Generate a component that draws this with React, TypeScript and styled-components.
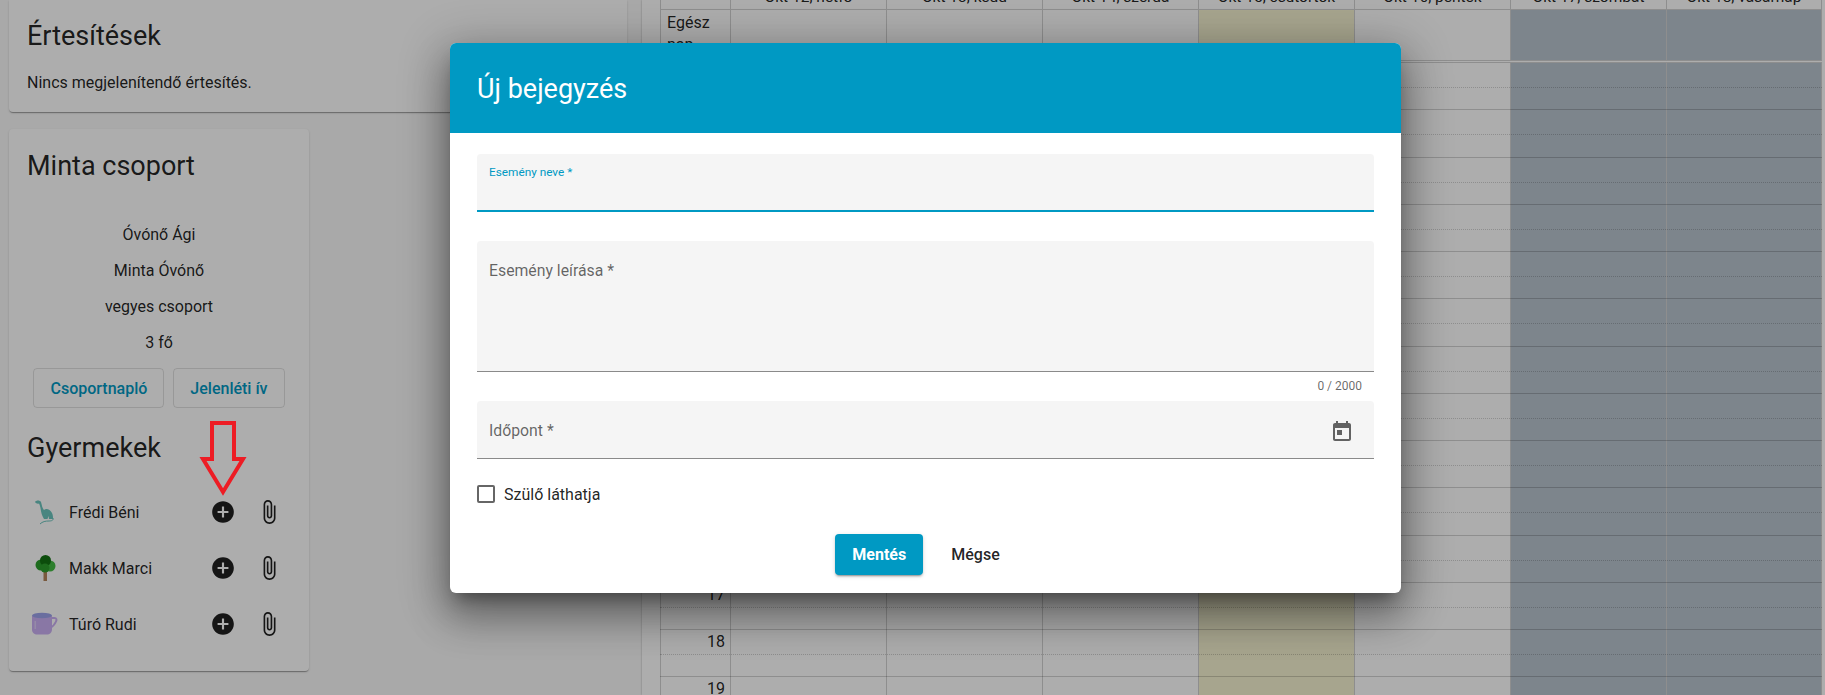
import React from 'react';
import styled, { createGlobalStyle } from 'styled-components';

const Global = createGlobalStyle`
  html, body { margin: 0; padding: 0; height: 100%; background: #fafafa; overflow: hidden; }
  body { font-family: Roboto, "Liberation Sans", sans-serif; color: rgba(0,0,0,.87); }
  * { box-sizing: border-box; }
`;

const primary = '#0099c3';
const line = '#d2d2d2';
const rule = 'rgba(0,0,0,.18)';

const Page = styled.div`
  position: relative;
  width: 1825px;
  height: 695px;
  overflow: hidden;
  display: flex;
  align-items: flex-start;
  background: #fafafa;
`;
const LeftColumn = styled.div`
  width: 618px;
  margin-left: 9px;
  flex: none;
  display: flex;
  flex-direction: column;
  gap: 17px;
`;
const Card = styled.section<{ $narrow?: boolean }>`
  width: ${p => (p.$narrow ? '300px' : '100%')};
  background: #fff;
  border-radius: ${p => (p.$narrow ? '4px' : '0 0 4px 4px')};
  padding: ${p => (p.$narrow ? '21px 18px 19px' : '20px 18px 19px')};
  box-shadow: 0 2px 1px -1px rgba(0,0,0,.2), 0 1px 1px 0 rgba(0,0,0,.14), 0 1px 3px 0 rgba(0,0,0,.12);
`;
const CardTitle = styled.h2`
  margin: 0;
  font-size: 27px;
  line-height: 32px;
  font-weight: 400;
`;
const BodyText = styled.p`
  margin: 21px 0 0;
  font-size: 16px;
  line-height: 20px;
`;
const InfoList = styled.div`
  margin-top: 43px;
  display: flex;
  flex-direction: column;
  gap: 16px;
  align-items: center;
  font-size: 16px;
  line-height: 20px;
`;
const ButtonRow = styled.div`
  margin-top: 15px;
  display: flex;
  justify-content: center;
  gap: 9px;
`;
const OutlineButton = styled.button`
  height: 40px;
  padding: 0 16px;
  background: transparent;
  border: 1px solid rgba(0,0,0,.12);
  border-radius: 4px;
  color: ${primary};
  font: 500 16px Roboto, sans-serif;
  white-space: nowrap;
`;
const SubTitle = styled(CardTitle)`
  margin-top: 24px;
  margin-bottom: 20px;
`;
const ChildRow = styled.div`
  height: 56px;
  display: flex;
  align-items: center;
  gap: 20px;
  padding-left: 5px;
  padding-right: 9px;
`;
const ChildIdentity = styled.div`
  flex: 1;
  display: flex;
  align-items: center;
  gap: 11px;
  font-size: 16px;
`;
const IconBox = styled.svg`
  width: 26px;
  height: 26px;
  flex: none;
  display: block;
`;

const CalendarPanel = styled.div`
  margin-left: 15px;
  flex: 1;
  height: 695px;
  padding-left: 18px;
  padding-right: 3px;
  background: #fff;
  box-shadow: 0 0 2px rgba(0,0,0,.3);
`;
const gridCols = 'grid-template-columns: 70px repeat(7, 156px);';
const HeaderRow = styled.div`
  display: grid;
  ${gridCols}
  height: 10px;
  border-bottom: 1px solid ${line};
`;
const HeaderCell = styled.div`
  height: 9px;
  overflow: hidden;
  display: flex;
  align-items: flex-end;
  justify-content: center;
  border-left: 1px solid ${line};
  font-size: 15.5px;
  line-height: 20px;
  white-space: nowrap;
  &:last-child { border-right: 1px solid ${line}; }
`;
const HeaderLabel = styled.span`
  display: block;
  margin-bottom: 2px;
`;
const AllDayRow = styled.div`
  display: grid;
  ${gridCols}
  height: 53px;
  border-bottom: 3px double ${line};
`;
const AllDayLabel = styled.div`
  padding: 2px 0 0 6px;
  font-size: 16px;
  line-height: 22px;
  border-left: 1px solid ${line};
  overflow: hidden;
`;
type Kind = 'plain' | 'today' | 'weekend';
const kindBg: Record<Kind, string> = { plain: 'transparent', today: '#f7f4d1', weekend: '#b9c4cf' };
const DayCell = styled.div<{ $kind: Kind }>`
  background: ${p => kindBg[p.$kind]};
  border-left: 1px solid ${line};
  &:last-child { border-right: 1px solid ${line}; }
`;
const HourRow = styled.div`
  display: grid;
  ${gridCols}
  grid-template-rows: 47.25px;
`;
const HourCellLayer = styled.div`
  grid-column: 1 / -1;
  grid-row: 1;
  display: grid;
  ${gridCols}
`;
const TimeCell = styled.div`
  border-left: 1px solid ${line};
  padding-right: 5px;
  text-align: right;
  font-size: 16px;
  line-height: 23px;
`;
const RowRules = styled.div`
  grid-column: 1 / -1;
  grid-row: 1;
  border-bottom: 1px solid ${rule};
  pointer-events: none;
  &::before {
    content: '';
    display: block;
    height: 24px;
    border-bottom: 1px dotted ${rule};
  }
`;

const Overlay = styled.div`
  position: absolute;
  inset: 0;
  background: rgba(0,0,0,.32);
  padding: 43px 0 0 450px;
  display: flex;
  align-items: flex-start;
`;
const Dialog = styled.div`
  width: 951px;
  height: 550px;
  background: #fff;
  border-radius: 6px;
  overflow: hidden;
  display: flex;
  flex-direction: column;
  box-shadow: 0 11px 15px -7px rgba(0,0,0,.36), 0 24px 38px 3px rgba(0,0,0,.26), 0 9px 46px 8px rgba(0,0,0,.23);
`;
const DialogHeader = styled.header`
  height: 90px;
  flex: none;
  padding: 1px 0 0 27px;
  display: flex;
  align-items: center;
  background: ${primary};
  color: #fff;
  font-size: 27px;
  font-weight: 400;
`;
const DialogBody = styled.div`
  flex: 1;
  padding: 21px 27px 0;
  display: flex;
  flex-direction: column;
`;
const Field = styled.div<{ $h: number; $active?: boolean; $gap?: number }>`
  height: ${p => p.$h}px;
  margin-top: ${p => p.$gap ?? 0}px;
  flex: none;
  background: #f5f5f5;
  border-radius: 4px 4px 0 0;
  border-bottom: ${p => (p.$active ? `2px solid ${primary}` : '1px solid #8a8a8a')};
  padding: 0 20px 0 12px;
  display: flex;
  justify-content: space-between;
`;
const FloatLabel = styled.label`
  margin-top: 10px;
  font-size: 11.8px;
  line-height: 16px;
  color: ${primary};
`;
const FieldLabel = styled.label<{ $top: number }>`
  margin-top: ${p => p.$top}px;
  font-size: 15.8px;
  line-height: 20px;
  color: rgba(0,0,0,.6);
`;
const Counter = styled.div`
  height: 29px;
  padding: 5px 12px 0 0;
  text-align: right;
  font-size: 12px;
  line-height: 18px;
  color: rgba(0,0,0,.6);
`;
const FieldIcon = styled.svg`
  width: 24px;
  height: 24px;
  margin-top: 19px;
  fill: rgba(0,0,0,.6);
`;
const CheckRow = styled.div`
  margin-top: 26px;
  height: 18px;
  display: flex;
  align-items: center;
  gap: 9px;
  font-size: 16px;
`;
const CheckBox = styled.span`
  width: 18px;
  height: 18px;
  border: 2px solid rgba(0,0,0,.6);
  border-radius: 2px;
`;
const ActionRow = styled.div`
  margin-top: 31px;
  display: flex;
  justify-content: center;
  align-items: center;
  gap: 28px;
  padding-right: 16px;
`;
const SaveButton = styled.button`
  width: 88px;
  height: 41px;
  border: 0;
  border-radius: 4px;
  background: ${primary};
  color: #fff;
  font: 700 16px Roboto, sans-serif;
  box-shadow: 0 3px 1px -2px rgba(0,0,0,.2), 0 2px 2px 0 rgba(0,0,0,.14), 0 1px 5px 0 rgba(0,0,0,.12);
`;
const TextButton = styled.button`
  border: 0;
  padding: 0;
  background: transparent;
  color: rgba(0,0,0,.87);
  font: 500 16px Roboto, sans-serif;
`;
const ArrowMark = styled.svg`
  position: absolute;
  left: 198px;
  top: 419px;
  width: 50px;
  height: 80px;
`;

const days: { label: string; kind: Kind }[] = [
  { label: 'Okt 12, hétfő', kind: 'plain' },
  { label: 'Okt 13, kedd', kind: 'plain' },
  { label: 'Okt 14, szerda', kind: 'plain' },
  { label: 'Okt 15, csütörtök', kind: 'today' },
  { label: 'Okt 16, péntek', kind: 'plain' },
  { label: 'Okt 17, szombat', kind: 'weekend' },
  { label: 'Okt 18, vasárnap', kind: 'weekend' },
];
const hours = Array.from({ length: 14 }, (_, i) => i + 6);

const AddIcon = () => (
  <IconBox viewBox="0 0 24 24" fill="#1f1f1f">
    <path d="M12 2C6.48 2 2 6.48 2 12s4.48 10 10 10 10-4.48 10-10S17.52 2 12 2zm5 11h-4v4h-2v-4H7v-2h4V7h2v4h4v2z" />
  </IconBox>
);
const ClipIcon = () => (
  <IconBox viewBox="0 0 24 24" fill="#1f1f1f">
    <path d="M16.5 6v11.5c0 2.21-1.79 4-4 4s-4-1.79-4-4V5c0-1.38 1.12-2.5 2.5-2.5s2.5 1.12 2.5 2.5v10.5c0 .55-.45 1-1 1s-1-.45-1-1V6H10v9.5c0 1.38 1.12 2.5 2.5 2.5s2.5-1.12 2.5-2.5V5c0-2.21-1.79-4-4-4S7 2.79 7 5v12.5c0 3.04 2.46 5.5 5.5 5.5s5.5-2.46 5.5-5.5V6h-1.5z" />
  </IconBox>
);
const DinoIcon = () => (
  <IconBox viewBox="0 0 26 26">
    <path fill="#6bc4bd" d="M3 3C4 1 8 1 9 3C10 6 10 9 12 11C14 9 18 10 20 14C21 16 21 18 21 20L17 20L16.5 17L15.5 20L12 20C10 17 9 13 8.5 9C8 7 7.5 5 7 4.5C5.5 5 4 4.5 3 3Z" />
    <path fill="none" stroke="#6bc4bd" strokeWidth="1" d="M21 19c.8 2.3-1.5 3-4 3-3.5 0-6.500.5-9 3" />
  </IconBox>
);
const TreeIcon = () => (
  <IconBox viewBox="0 0 26 26">
    <rect x="11.5" y="14" width="3.5" height="12" fill="#b3845a" />
    <circle cx="9" cy="10" r="5.5" fill="#2b9e2c" />
    <circle cx="18" cy="11" r="5.5" fill="#44bb44" />
    <circle cx="13.5" cy="5.5" r="5.5" fill="#137213" />
    <circle cx="13" cy="13" r="4.5" fill="#2b9e2c" />
  </IconBox>
);
const MugIcon = () => (
  <IconBox viewBox="0 0 26 26">
    <path fill="none" stroke="#cbb0f3" strokeWidth="2" d="M19 7h3.5c2 0 2.5 1.5 1.5 3.5-1 2.5-3 5-6 6.5" />
    <path fill="#cbb0f3" d="M0 4.500h20v14c0 3-2.500 5-5 5H5c-2.500 0-5-1.500-5-5z" />
    <ellipse cx="10" cy="4.5" rx="10" ry="2.8" fill="#9ca3eb" />
    <rect x="2.5" y="10" width="1.5" height="8" fill="#dccdf7" />
  </IconBox>
);

const children = [
  { name: 'Frédi Béni', Icon: DinoIcon },
  { name: 'Makk Marci', Icon: TreeIcon },
  { name: 'Túró Rudi', Icon: MugIcon },
];

export default function App() {
  return (
    <Page>
      <Global />
      <LeftColumn>
        <Card>
          <CardTitle>Értesítések</CardTitle>
          <BodyText>Nincs megjelenítendő értesítés.</BodyText>
        </Card>
        <Card $narrow>
          <CardTitle>Minta csoport</CardTitle>
          <InfoList>
            <span>Óvónő Ági</span>
            <span>Minta Óvónő</span>
            <span>vegyes csoport</span>
            <span>3 fő</span>
          </InfoList>
          <ButtonRow>
            <OutlineButton>Csoportnapló</OutlineButton>
            <OutlineButton>Jelenléti ív</OutlineButton>
          </ButtonRow>
          <SubTitle>Gyermekek</SubTitle>
          {children.map(({ name, Icon }) => (
            <ChildRow key={name}>
              <ChildIdentity>
                <Icon />
                <span>{name}</span>
              </ChildIdentity>
              <AddIcon />
              <ClipIcon />
            </ChildRow>
          ))}
        </Card>
      </LeftColumn>

      <CalendarPanel>
        <HeaderRow>
          <HeaderCell />
          {days.map(d => (
            <HeaderCell key={d.label}><HeaderLabel>{d.label}</HeaderLabel></HeaderCell>
          ))}
        </HeaderRow>
        <AllDayRow>
          <AllDayLabel>Egész nap</AllDayLabel>
          {days.map(d => <DayCell key={d.label} $kind={d.kind} />)}
        </AllDayRow>
        {hours.map(h => (
          <HourRow key={h}>
            <HourCellLayer>
              <TimeCell>{h}</TimeCell>
              {days.map(d => <DayCell key={d.label} $kind={d.kind} />)}
            </HourCellLayer>
            <RowRules />
          </HourRow>
        ))}
      </CalendarPanel>

      <Overlay>
        <Dialog>
          <DialogHeader>Új bejegyzés</DialogHeader>
          <DialogBody>
            <Field $h={58} $active><FloatLabel>Esemény neve *</FloatLabel></Field>
            <Field $h={131} $gap={29}><FieldLabel $top={20}>Esemény leírása *</FieldLabel></Field>
            <Counter>0 / 2000</Counter>
            <Field $h={58}>
              <FieldLabel $top={20}>Időpont *</FieldLabel>
              <FieldIcon viewBox="0 0 24 24">
                <path d="M19 3h-1V1h-2v2H8V1H6v2H5c-1.11 0-1.99.9-1.99 2L3 19c0 1.1.89 2 2 2h14c1.1 0 2-.9 2-2V5c0-1.1-.9-2-2-2zm0 16H5V8h14v11zM7 10h5v5H7z" />
              </FieldIcon>
            </Field>
            <CheckRow>
              <CheckBox />
              <span>Szülő láthatja</span>
            </CheckRow>
            <ActionRow>
              <SaveButton>Mentés</SaveButton>
              <TextButton>Mégse</TextButton>
            </ActionRow>
          </DialogBody>
        </Dialog>
      </Overlay>

      <ArrowMark viewBox="0 0 50 80">
        <path d="M14 4H36V40H45L25 73L5 40H14Z" fill="none" stroke="#ed1c24" strokeWidth="4" />
      </ArrowMark>
    </Page>
  );
}
